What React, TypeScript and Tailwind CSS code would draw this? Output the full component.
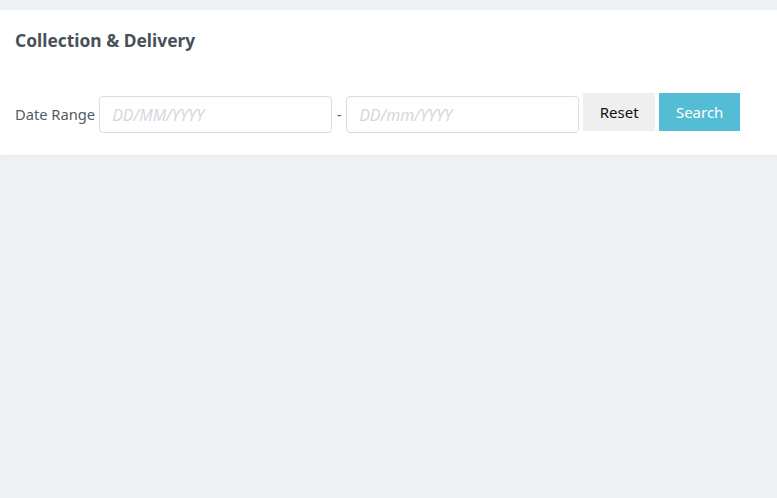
export default function App() {
  return (
    <div
      className="min-h-[498px] w-full bg-[#eef1f4] pt-[10px]"
      style={{ fontFamily: '"Noto Sans", "Open Sans", sans-serif' }}
    >
      <div className="bg-white h-[145px] px-[15px] shadow-[0_1px_2px_rgba(0,0,0,0.04)]">
        {/* Header */}
        <h1 className="pt-[17px] text-[17.4px] leading-[26px] font-bold text-[#48505a]">
          Collection &amp; Delivery
        </h1>

        {/* Filter row */}
        <div className="mt-[40px] flex items-start">
          <span className="mt-[3px] h-[37px] flex items-center text-[14.7px] text-[#555b62] mr-[4px]">
            Date Range
          </span>
          <input
            placeholder="DD/MM/YYYY"
            className="mt-[3px] w-[233px] h-[37px] rounded-[4px] border border-[#dcdcdc] px-[12px] text-[16px] italic placeholder:text-[#d3d8de] outline-none"
          />
          <span className="mt-[3px] h-[37px] flex items-center justify-center w-[14px] text-[14px] text-[#555b62]">
            -
          </span>
          <input
            placeholder="DD/mm/YYYY"
            className="mt-[3px] w-[233px] h-[37px] rounded-[4px] border border-[#dcdcdc] px-[12px] text-[16px] italic placeholder:text-[#d3d8de] outline-none"
          />
          <button className="ml-[4px] w-[72px] h-[38px] bg-[#efefef] text-[15px] text-[#111]">
            Reset
          </button>
          <button className="ml-[4px] w-[81px] h-[38px] bg-[#54bcd4] text-[15px] text-white">
            Search
          </button>
        </div>
      </div>
    </div>
  );
}
